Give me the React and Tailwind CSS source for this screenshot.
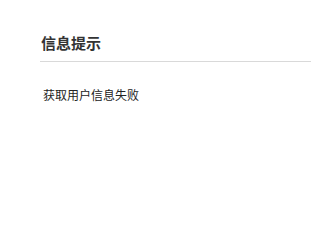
import React from 'react';

const App = () => {
    return (
        <div className="w-[311px] h-[250px] bg-white pl-10 pt-[33px]" style={{ fontFamily: '"Liberation Sans", "Noto Sans CJK SC", sans-serif' }}>
            {/* Header */}
            <div className="border-b border-[#d9d9d9] pb-[7px]">
                <h3 className="text-[15px] leading-[21px] font-bold text-[#333] pl-[1px]">信息提示</h3>
            </div>

            {/* Body */}
            <div className="pt-[26px] pl-[3px]">
                <p className="text-[12px] leading-[16px] text-[#222]">获取用户信息失败</p>
            </div>
        </div>
    );
};

export default App;
